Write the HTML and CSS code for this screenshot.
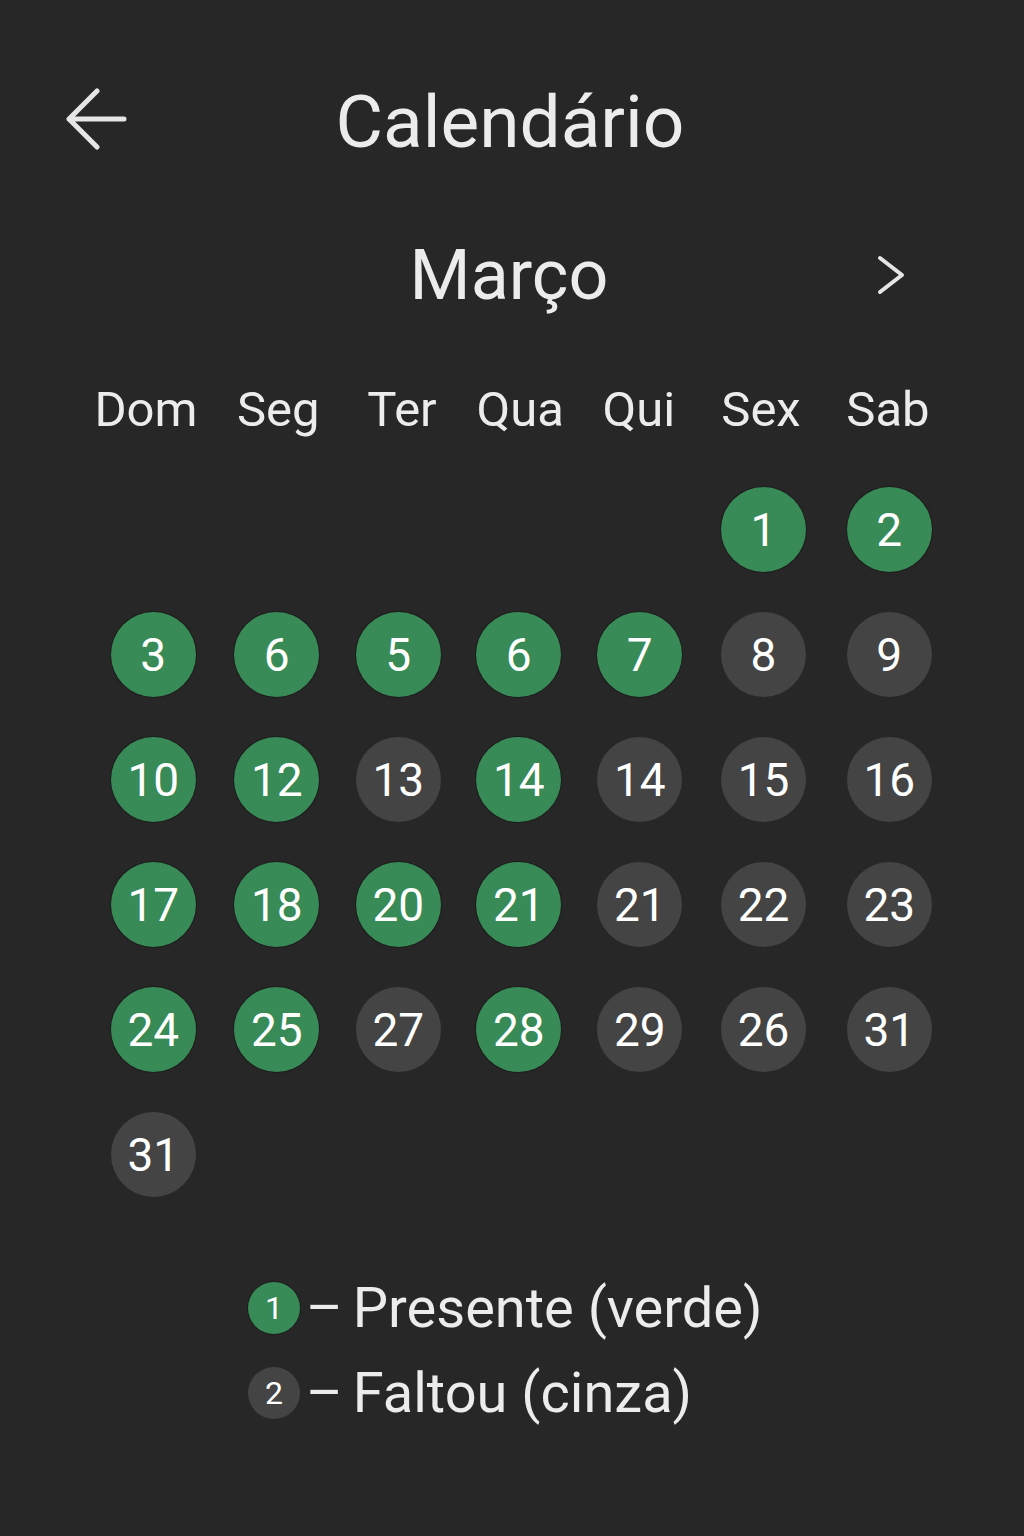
FILE: index.html
```html
<!DOCTYPE html>
<html lang="pt">
<head>
<meta charset="utf-8">
<title>Calendário</title>
<link rel="stylesheet" href="styles.css">
</head>
<body>
<div class="app">
  <header class="header">
    <button class="back" aria-label="Voltar">
      <svg width="62" height="62" viewBox="0 0 62 62"><path d="M31 3 L3 31 L31 59 M3 31 H58" fill="none" stroke="#e6e6e6" stroke-width="5" stroke-linecap="round" stroke-linejoin="round"/></svg>
    </button>
    <h1 class="title">Calendário</h1>
    <span></span>
  </header>

  <div class="month-row">
    <span></span>
    <h2 class="month">Março</h2>
    <button class="next" aria-label="Próximo">
      <svg width="30" height="42" viewBox="0 0 30 42"><path d="M4 4 L26 21 L4 38" fill="none" stroke="#e6e6e6" stroke-width="4" stroke-linecap="round" stroke-linejoin="round"/></svg>
    </button>
  </div>

  <div class="weekdays">
    <span>Dom</span><span>Seg</span><span>Ter</span><span>Qua</span><span>Qui</span><span>Sex</span><span>Sab</span>
  </div>

  <div class="days">
    <span class="empty"></span><span class="empty"></span><span class="empty"></span><span class="empty"></span><span class="empty"></span>
    <span class="day present">1</span><span class="day present">2</span>

    <span class="day present">3</span><span class="day present">6</span><span class="day present">5</span><span class="day present">6</span><span class="day present">7</span><span class="day absent">8</span><span class="day absent">9</span>

    <span class="day present">10</span><span class="day present">12</span><span class="day absent">13</span><span class="day present">14</span><span class="day absent">14</span><span class="day absent">15</span><span class="day absent">16</span>

    <span class="day present">17</span><span class="day present">18</span><span class="day present">20</span><span class="day present">21</span><span class="day absent">21</span><span class="day absent">22</span><span class="day absent">23</span>

    <span class="day present">24</span><span class="day present">25</span><span class="day absent">27</span><span class="day present">28</span><span class="day absent">29</span><span class="day absent">26</span><span class="day absent">31</span>

    <span class="day absent">31</span>
  </div>

  <div class="legend">
    <div class="legend-item"><span class="dot present">1</span><span class="legend-text"><span class="dash">–</span>Presente (verde)</span></div>
    <div class="legend-item"><span class="dot absent">2</span><span class="legend-text"><span class="dash">–</span>Faltou (cinza)</span></div>
  </div>
</div>
</body>
</html>
```

FILE: styles.css
```css
* { box-sizing: border-box; }

html, body {
  margin: 0;
  padding: 0;
  background: #272727;
}

body {
  font-family: Roboto, "Noto Sans", "Liberation Sans", sans-serif;
  color: #ececec;
  width: 1024px;
  min-height: 1536px;
}

.app {
  padding-top: 72px;
}

button {
  background: none;
  border: 0;
  padding: 0;
  margin: 0;
  cursor: pointer;
  display: flex;
  align-items: center;
}

.header {
  display: grid;
  grid-template-columns: 1fr auto 1fr;
  align-items: center;
  height: 100px;
}

.back {
  margin-left: 66px;
  margin-top: -6px;
  justify-self: start;
}

.title {
  margin: 0;
  font-size: 73px;
  font-weight: 400;
  line-height: 100px;
  transform: translateX(-2px);
}

.month-row {
  display: grid;
  grid-template-columns: 1fr auto 1fr;
  align-items: center;
  height: 76px;
  margin-top: 65px;
}

.month {
  margin: 0;
  font-size: 70px;
  font-weight: 400;
  line-height: 76px;
  transform: translateX(-3px);
}

.next {
  justify-self: start;
  margin-left: 265px;
}

.weekdays {
  display: grid;
  grid-template-columns: 136px 128.5px 119px 117.5px 119.5px 125px 129px;
  margin: 67px 0 0 78px;
  height: 60px;
  align-items: center;
  font-size: 49px;
  line-height: 60px;
}

.weekdays span {
  text-align: center;
}

.days {
  display: grid;
  grid-template-columns: 124.5px 122.5px 120.5px 120.5px 121.5px 126px 125.5px;
  margin: 47px 0 0 91px;
  row-gap: 40px;
  justify-items: center;
}

.day {
  width: 85px;
  height: 85px;
  border-radius: 50%;
  display: flex;
  align-items: center;
  justify-content: center;
  font-size: 46px;
  color: #ffffff;
  line-height: 1;
}

.empty {
  height: 85px;
}

.present {
  background: #388a56;
  box-shadow: 0 0 0 1px rgba(20, 20, 20, 0.5);
}

.absent {
  background: #444444;
}

.legend {
  margin-top: 76px;
  padding-left: 248px;
  display: flex;
  flex-direction: column;
  gap: 15px;
}

.legend-item {
  display: flex;
  align-items: center;
  height: 70px;
  gap: 6px;
}

.dot {
  width: 52px;
  height: 52px;
  border-radius: 50%;
  display: flex;
  align-items: center;
  justify-content: center;
  font-size: 32px;
  color: #ffffff;
  flex: none;
}

.legend-text {
  font-size: 56px;
  line-height: 70px;
  color: #ececec;
}

.dash {
  margin-right: 10px;
}
```
